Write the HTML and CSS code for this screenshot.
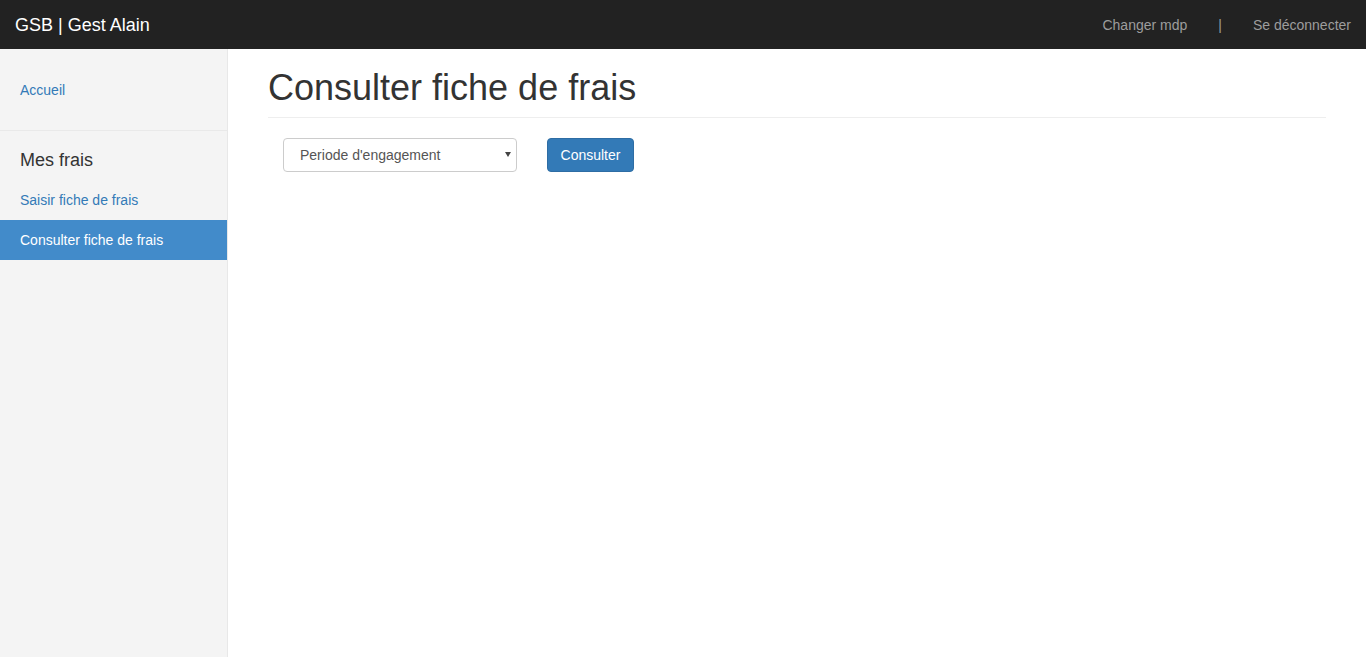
FILE: index.html
```html
<!DOCTYPE html>
<html lang="fr">
<head>
<meta charset="utf-8">
<title>GSB | Gest Alain</title>
<link rel="stylesheet" href="styles.css">
</head>
<body>
<header class="navbar">
  <a class="brand" href="#">GSB | Gest Alain</a>
  <nav class="nav-right">
    <a class="nav-link" href="#">Changer mdp</a>
    <span class="nav-sep">|</span>
    <a class="nav-link" href="#">Se déconnecter</a>
  </nav>
</header>
<div class="layout">
  <aside class="sidebar">
    <ul class="side-list first">
      <li><a class="side-link" href="#">Accueil</a></li>
    </ul>
    <div class="side-section">
      <div class="side-heading">Mes frais</div>
      <ul class="side-list">
        <li><a class="side-link" href="#">Saisir fiche de frais</a></li>
        <li><a class="side-link active" href="#">Consulter fiche de frais</a></li>
      </ul>
    </div>
  </aside>
  <main class="main">
    <h1 class="page-header">Consulter fiche de frais</h1>
    <form class="filter">
      <div class="select-wrap">
        <div class="select-box">Periode d'engagement</div>
        <span class="select-arrow"></span>
      </div>
      <button type="button" class="btn">Consulter</button>
    </form>
  </main>
</div>
</body>
</html>
```
FILE: styles.css
```css
* { box-sizing: border-box; }
html, body { margin: 0; padding: 0; }
body {
  font-family: "Liberation Sans", Arial, sans-serif;
  font-size: 14px;
  line-height: 20px;
  color: #333;
  background: #fff;
}
a { text-decoration: none; }

.navbar {
  height: 49px;
  background: #222;
  display: flex;
  align-items: center;
  justify-content: space-between;
}
.brand {
  color: #fff;
  font-size: 18px;
  line-height: 20px;
  padding: 0 15px;
}
.nav-right {
  display: flex;
  align-items: center;
}
.nav-link, .nav-sep {
  color: #9d9d9d;
  padding: 0 15px;
  font-size: 14px;
}
.nav-sep { padding: 0 16px; }

.layout {
  display: flex;
  min-height: calc(100vh - 49px);
}
.sidebar {
  width: 228px;
  flex: 0 0 228px;
  background: #f4f4f4;
  border-right: 1px solid #e8e8e8;
  padding-top: 21px;
}
.side-list {
  list-style: none;
  margin: 0;
  padding: 0;
}
.side-list.first { margin-bottom: 20px; }
.side-section { border-top: 1px solid #e9e9e9; }
.side-heading {
  font-size: 18px;
  line-height: 20px;
  color: #333;
  padding: 19px 20px 10px;
}
.side-link {
  display: block;
  padding: 10px 20px;
  color: #337ab7;
}
.side-link.active {
  background: #428bca;
  color: #fff;
}

.main {
  flex: 1;
  padding: 0 40px;
}
.page-header {
  margin: 19px 0 0;
  font-size: 36px;
  font-weight: 500;
  line-height: 1.1;
  padding-bottom: 9px;
  border-bottom: 1px solid #eee;
  color: #333;
}
.filter {
  display: flex;
  align-items: center;
  gap: 30px;
  padding: 20px 15px 0;
}
.select-wrap {
  position: relative;
  width: 234px;
}
.select-box {
  height: 34px;
  border: 1px solid #ccc;
  border-radius: 4px;
  padding: 6px 16px;
  color: #555;
  font-size: 14px;
  line-height: 20px;
  background: #fff;
}
.select-arrow {
  position: absolute;
  right: 6px;
  top: 14px;
  width: 0;
  height: 0;
  border-left: 3.5px solid transparent;
  border-right: 3.5px solid transparent;
  border-top: 5px solid #444;
}
.btn {
  height: 34px;
  width: 87px;
  background: #337ab7;
  border: 1px solid #2e6da4;
  border-radius: 4px;
  color: #fff;
  font-family: "Liberation Sans", Arial, sans-serif;
  font-size: 14px;
  line-height: 20px;
  padding: 6px 12px;
  cursor: pointer;
}
```
